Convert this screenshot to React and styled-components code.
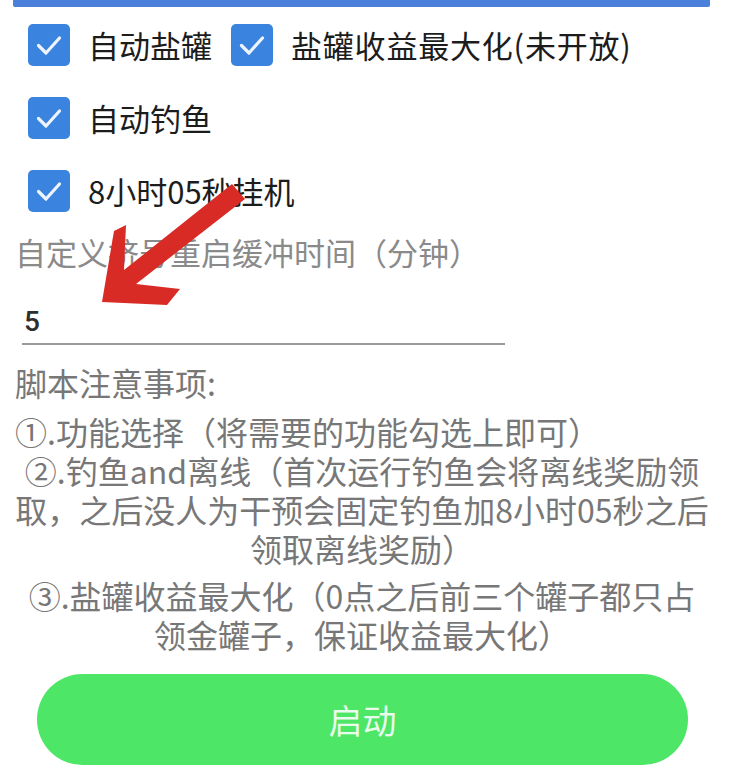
import React from 'react';
import styled, { createGlobalStyle } from 'styled-components';

const GlobalStyle = createGlobalStyle`
  html, body {
    margin: 0;
    padding: 0;
    background: #ffffff;
  }
  body {
    font-family: "Noto Sans CJK SC", "Noto Sans", sans-serif;
  }
`;

const options = [
  [{ label: '自动盐罐' }, { label: '盐罐收益最大化(未开放)', wide: true }],
  [{ label: '自动钓鱼' }],
  [{ label: '8小时05秒挂机' }],
];

const CheckIcon = () => (
  <svg width="42" height="42" viewBox="0 0 42 42">
    <rect x="0" y="0" width="42" height="42" rx="5" fill="#3a83de" />
    <polyline
      points="10.5,21.5 18,29 31.5,14"
      fill="none"
      stroke="#eef4fd"
      strokeWidth="3.2"
      strokeLinecap="round"
      strokeLinejoin="round"
    />
  </svg>
);

const App = () => {
  return (
    <Page>
      <GlobalStyle />
      <TopBar />

      <OptionList>
        {options.map((row, i) => (
          <OptionRow key={i}>
            {row.map((opt) => (
              <Option key={opt.label}>
                <CheckIcon />
                <OptionText wide={opt.wide}>{opt.label}</OptionText>
              </Option>
            ))}
          </OptionRow>
        ))}
      </OptionList>

      <FieldLabel>自定义挤号重启缓冲时间（分钟）</FieldLabel>
      <Field defaultValue="5" />

      <Notes>
        <NoteLine>脚本注意事项:</NoteLine>
        <NoteLine gap={10}>①.功能选择（将需要的功能勾选上即可）</NoteLine>
        <NoteLine center>
          ②.钓鱼and离线（首次运行钓鱼会将离线奖励领<br />
          取，之后没人为干预会固定钓鱼加8小时05秒之后<br />
          领取离线奖励）
        </NoteLine>
        <NoteLine center gap={8}>
          ③.盐罐收益最大化（0点之后前三个罐子都只占<br />
          领金罐子，保证收益最大化）
        </NoteLine>
      </Notes>

      <StartButton>启动</StartButton>

      <Arrow viewBox="0 0 731 769" width="731" height="769">
        <polygon
          fill="#d92b25"
          points="102,302 114,231 126,225 124,270 232,184 245,199 136,284 180,289 167,305"
        />
      </Arrow>
    </Page>
  );
};

const Page = styled.div`
  position: relative;
  width: 731px;
  height: 769px;
  overflow: hidden;
  background: #fff;
`;

const TopBar = styled.div`
  height: 7px;
  margin-left: 13px;
  width: 697px;
  background: #4a80dc;
  border-radius: 0 0 2px 2px;
`;

const OptionList = styled.div`
  display: flex;
  flex-direction: column;
  gap: 31px;
  padding-left: 28px;
  margin-top: 17px;
`;

const OptionRow = styled.div`
  display: flex;
  align-items: center;
  gap: 19px;
  height: 42px;
`;

const Option = styled.label`
  display: flex;
  align-items: center;
  gap: 18px;
  svg {
    flex-shrink: 0;
  }
`;

const OptionText = styled.span`
  font-size: 31px;
  color: #1c1c1c;
  line-height: 42px;
  white-space: nowrap;
  letter-spacing: ${(p) => (p.wide ? '0.8px' : '0')};
`;

const FieldLabel = styled.div`
  margin-top: 20px;
  padding-left: 15px;
  font-size: 31px;
  line-height: 40px;
  color: #8a8a8a;
`;

const Field = styled.input`
  display: block;
  box-sizing: border-box;
  margin: 23px 0 0 22px;
  width: 483px;
  height: 50px;
  padding: 6px 0 2px 2px;
  border: none;
  border-bottom: 2px solid #9a9a9a;
  outline: none;
  background: transparent;
  font-family: "Roboto", "Noto Sans CJK SC", sans-serif;
  font-size: 28px;
  font-weight: 500;
  color: #2e2e2e;
`;

const Notes = styled.div`
  margin-top: 18px;
  padding: 0 22px 0 15px;
  font-size: 32px;
  line-height: 39px;
  color: #777;
`;

const NoteLine = styled.div`
  margin-top: ${(p) => (p.gap ? `${p.gap}px` : '0')};
  text-align: ${(p) => (p.center ? 'center' : 'left')};
  white-space: nowrap;
`;

const StartButton = styled.button`
  display: block;
  margin: 20px 0 0 37px;
  width: 651px;
  height: 91px;
  border: none;
  border-radius: 46px;
  background: #4de667;
  color: rgba(255, 255, 255, 0.88);
  font-family: "Noto Sans CJK SC", sans-serif;
  font-size: 34px;
  cursor: pointer;
`;

const Arrow = styled.svg`
  position: absolute;
  top: 0;
  left: 0;
  pointer-events: none;
`;

export default App;
